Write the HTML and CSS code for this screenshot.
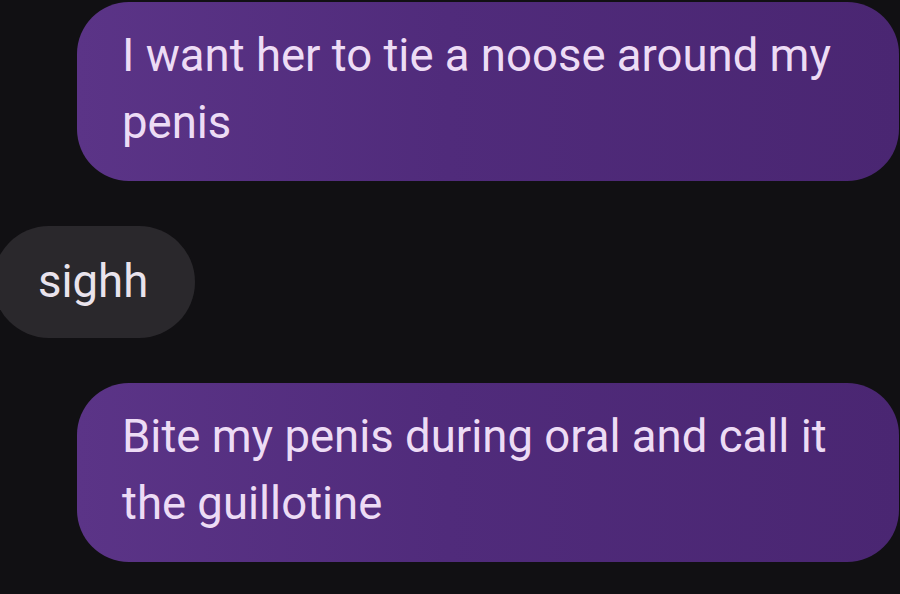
FILE: index.html
```html
<!DOCTYPE html>
<html lang="en">
<head>
<meta charset="utf-8">
<link rel="stylesheet" href="styles.css">
</head>
<body>
<div class="chat">
  <div class="msg out">I want her to tie a noose around my penis</div>
  <div class="msg in">sighh</div>
  <div class="msg out">Bite my penis during oral and call it the guillotine</div>
</div>
</body>
</html>
```
FILE: styles.css
```css
html, body {
  margin: 0;
  padding: 0;
  background: #111013;
  width: 900px;
  height: 594px;
  overflow: hidden;
}
.chat {
  display: flex;
  flex-direction: column;
  gap: 45px;
  padding-top: 2px;
  font-family: Roboto, "Noto Sans", sans-serif;
  font-size: 45.5px;
  font-weight: 400;
  line-height: 67px;
}
.msg {
  box-sizing: border-box;
}
.out {
  align-self: flex-end;
  margin-right: 1px;
  width: 822px;
  padding: 20px 40px 25px 45px;
  border-radius: 52px;
  background: linear-gradient(90deg, #5b3487 0%, #502b7b 45%, #4a2672 100%);
  color: #eddcf5;
}
.in {
  align-self: flex-start;
  margin-left: -7px;
  padding: 22px 47px 23px 45px;
  border-radius: 56px;
  background: #2a282c;
  color: #e9e3ec;
}
```
